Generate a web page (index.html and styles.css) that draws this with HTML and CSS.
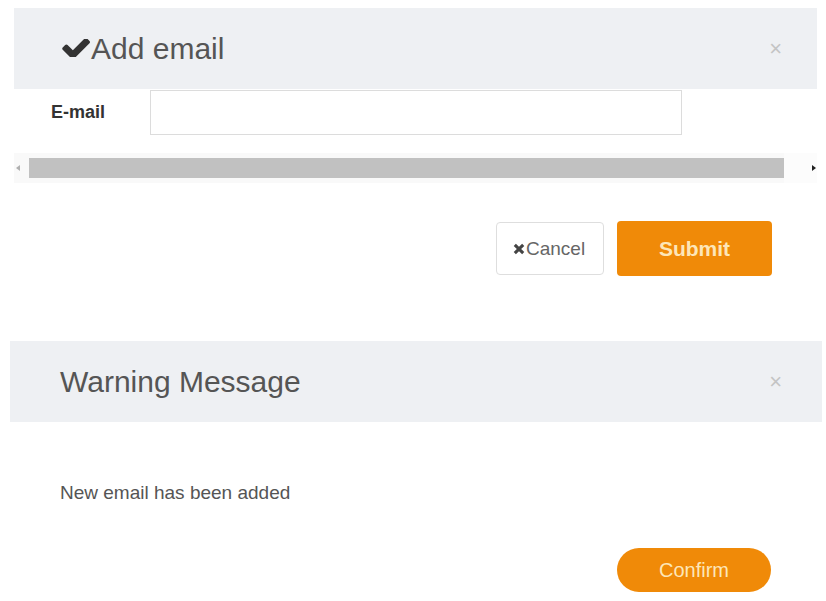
FILE: index.html
```html
<!DOCTYPE html>
<html lang="en">
<head>
<meta charset="utf-8">
<title>Dialogs</title>
<link rel="stylesheet" href="styles.css">
</head>
<body>
  <section class="dialog dialog-email">
    <header class="dlg-head">
      <h2 class="dlg-title"><svg class="check" viewBox="109 402 1562 984" aria-hidden="true"><path d="M1671 566q0 40-28 68l-724 724-136 136q-28 28-68 28t-68-28l-136-136-362-362q-28-28-28-68t28-68l136-136q28-28 68-28t68 28l294 295 656-657q28-28 68-28t68 28l136 136q28 28 28 68z"/></svg>Add email</h2>
      <span class="close">×</span>
    </header>
    <div class="field-row">
      <label class="field-label">E-mail</label>
      <div class="field-input"></div>
    </div>
    <div class="hscroll">
      <span class="arr arr-left"></span>
      <div class="thumb"></div>
      <div class="hs-end"><span class="arr arr-right"></span></div>
    </div>
    <div class="actions">
      <button class="btn btn-cancel"><svg class="times" viewBox="0 0 10 10" aria-hidden="true"><path d="M0.6 2.4 2.4 0.6 5 3.2 7.6 0.6 9.4 2.4 6.8 5 9.4 7.6 7.6 9.4 5 6.8 2.4 9.4 0.6 7.6 3.2 5z"/></svg>Cancel</button>
      <button class="btn btn-submit">Submit</button>
    </div>
  </section>

  <section class="dialog dialog-warn">
    <header class="dlg-head">
      <h2 class="dlg-title">Warning Message</h2>
      <span class="close">×</span>
    </header>
    <p class="msg">New email has been added</p>
    <div class="actions actions-warn">
      <button class="btn btn-confirm">Confirm</button>
    </div>
  </section>
</body>
</html>
```

FILE: styles.css
```css
* { box-sizing: border-box; }
html, body { margin: 0; padding: 0; background: #fff; }
body {
  font-family: "Liberation Sans", Arial, Helvetica, sans-serif;
  color: #555;
  width: 826px;
  height: 601px;
  overflow: hidden;
}

.dialog { display: flex; flex-direction: column; }
.dialog-email { margin: 8px 0 0 14px; width: 803px; }
.dialog-warn { margin: 65px 0 0 10px; width: 812px; }

.dlg-head {
  height: 81px;
  background: #eef0f3;
  display: flex;
  align-items: center;
  justify-content: space-between;
  padding: 0 35px 0 48px;
}
.dialog-warn .dlg-head { padding: 0 40px 0 50px; }

.dlg-title {
  margin: 0;
  font-size: 30px;
  font-weight: normal;
  color: #555;
  display: flex;
  align-items: center;
  line-height: 34px;
}
.check { width: 28px; height: 18px; fill: #333; margin-right: 1px; margin-top: -2px; }

.close { font-size: 22px; color: #c4c4c4; line-height: 22px; }

.field-row {
  display: flex;
  align-items: center;
  margin-top: 1px;
  padding-left: 37px;
}
.field-label {
  width: 99px;
  font-size: 18px;
  font-weight: bold;
  color: #333;
}
.field-input {
  width: 532px;
  height: 45px;
  border: 1px solid #dcdcdc;
  background: #fff;
}

.hscroll {
  margin-top: 18px;
  height: 30px;
  background: #f9f9f9;
  display: flex;
  align-items: center;
}
.arr { width: 0; height: 0; border-top: 3px solid transparent; border-bottom: 3px solid transparent; }
.arr-left { border-right: 4px solid #b0b0b0; margin: 0 9px 0 2px; }
.thumb { width: 755px; height: 20px; background: #c1c1c1; }
.hs-end {
  flex: 1;
  height: 100%;
  background: #fcfcfc;
  display: flex;
  align-items: center;
  justify-content: flex-end;
  padding-right: 1px;
}
.arr-right { border-left: 4px solid #222; }

.actions {
  display: flex;
  justify-content: flex-end;
  align-items: center;
  gap: 13px;
  margin-top: 38px;
  padding-right: 45px;
}
.btn {
  font-family: "Liberation Sans", Arial, Helvetica, sans-serif;
  border: none;
  cursor: pointer;
  display: flex;
  align-items: center;
  justify-content: center;
}
.btn-cancel {
  width: 108px;
  height: 53px;
  background: #fff;
  border: 1px solid #dedede;
  border-radius: 4px;
  font-size: 19px;
  color: #666;
  justify-content: flex-start;
  padding-left: 16px;
  padding-top: 2px;
}
.times { width: 12px; height: 12px; fill: #444; margin-right: 1px; }
.btn-submit {
  width: 155px;
  height: 55px;
  background: #f08a08;
  border-radius: 4px;
  font-size: 21px;
  font-weight: bold;
  color: #fde6b8;
}

.msg {
  margin: 60px 0 0 50px;
  font-size: 19px;
  line-height: 22px;
  color: #555;
}

.actions-warn { margin-top: 44px; padding-right: 51px; }
.btn-confirm {
  width: 154px;
  height: 44px;
  background: #f08a08;
  border-radius: 22px;
  font-size: 20px;
  color: #fde6b8;
}
```
